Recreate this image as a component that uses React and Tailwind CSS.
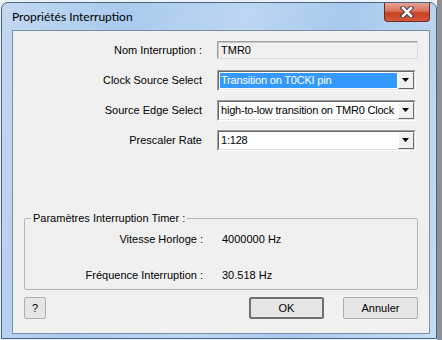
import React from 'react';

const body = { fontFamily: '"Liberation Sans", Arial, sans-serif' };

const Combo = ({ value, selected, width = 'w-[199px]' }) => (
    <div className={`${width} h-[21px] flex border border-[#a0a0a0] border-b-white border-r-white bg-white`}>
        <div className="flex-1 flex border border-[#696969] border-b-[#e3e3e3] border-r-[#e3e3e3] min-w-0">
            <div className="flex-1 min-w-0 p-[1px]">
                <div className={`h-full flex items-center pl-[1px] whitespace-nowrap overflow-hidden tracking-[-0.2px] ${selected ? 'bg-[#3399ff] text-white' : 'text-black'}`}>
                    {value}
                </div>
            </div>
            <div className="w-[16px] shrink-0 flex items-center justify-center bg-[#f0f0f0] border border-white border-b-[#696969] border-r-[#696969]">
                <svg width="8" height="5" viewBox="0 0 8 5"><path d="M0 0H7L3.5 4Z" fill="#000" /></svg>
            </div>
        </div>
    </div>
);

const Row = ({ label, children }) => (
    <div className="flex items-center h-[30px]">
        <div className="w-[190px] text-right pr-[1px] whitespace-nowrap">{label}</div>
        <div className="ml-[14px]">{children}</div>
    </div>
);

export default function App() {
    return (
        <div className="w-[442px] h-[340px] flex bg-[#eaf1f8] overflow-hidden text-[11px] text-black" style={body}>
            <div className="pt-[2px] pl-[1px]">
                {/* Window frame */}
                <div className="relative w-[436px] h-[337px] rounded-t-[7px] border border-[#4d6582] bg-[linear-gradient(100deg,#c3d8f0_0%,#a9cbee_25%,#bdd6f2_50%,#a7c9ee_70%,#c6dcf3_100%)] flex flex-col">
                    <div className="h-[27px] flex items-start shrink-0">
                        <div className="mt-[5px] ml-[10px] text-[12px] text-black" style={{ fontFamily: 'Lato, "Noto Sans", sans-serif' }}>
                            Propriétés Interruption
                        </div>
                        <div className="ml-auto mr-[6px] w-[46px] h-[19px] rounded-b-[4px] border border-t-0 border-[#6e2b22] bg-[linear-gradient(to_bottom,#e8a493_0%,#d8735c_45%,#c8401f_55%,#d35a3c_100%)] flex items-center justify-center">
                            <svg width="14" height="12" viewBox="0 0 14 12">
                                <path d="M3 2L11 10M11 2L3 10" stroke="#3a3f4a" strokeWidth="4.5" strokeLinecap="square" />
                                <path d="M3 2L11 10M11 2L3 10" stroke="#ffffff" strokeWidth="2.5" strokeLinecap="square" />
                            </svg>
                        </div>
                    </div>

                    {/* Client area */}
                    <div className="ml-[10px] w-[418px] h-[304px] border border-[#7c8ea4] bg-[#f0f0f0] flex flex-col">
                        <div className="pt-[4px]">
                            <Row label="Nom Interruption :">
                                <div className="w-[201px] h-[18px] flex items-center pl-[3px] bg-[#f0f0f0] border border-[#a0a0a0] border-b-[#dcdcdc] border-r-[#dcdcdc] shadow-[inset_1px_1px_0_#c8c8c8]">
                                    TMR0
                                </div>
                            </Row>
                            <Row label="Clock Source Select">
                                <Combo value="Transition on T0CKI pin" selected />
                            </Row>
                            <Row label="Source Edge Select">
                                <Combo value="high-to-low transition on TMR0 Clock" />
                            </Row>
                            <Row label="Prescaler Rate">
                                <Combo value="1:128" />
                            </Row>
                        </div>

                        <fieldset className="mt-[57px] ml-[11px] w-[394px] border border-[#b5b5b5] rounded-[2px] pb-[6px]">
                            <legend className="ml-[6px] px-[2px] leading-[13px]">Paramètres Interruption Timer :</legend>
                            <div className="pt-[6px] flex items-center h-[22px]">
                                <div className="w-[178px] text-right">Vitesse Horloge :</div>
                                <div className="ml-[19px]">4000000 Hz</div>
                            </div>
                            <div className="mt-[20px] flex items-center h-[16px]">
                                <div className="w-[178px] text-right">Fréquence Interruption :</div>
                                <div className="ml-[19px]">30.518 Hz</div>
                            </div>
                        </fieldset>

                        <div className="mt-[7px] pl-[11px] pr-[11px] flex items-center">
                            <button className="w-[22px] h-[22px] border border-[#adadad] bg-[#e5e5e5] rounded-[2px]">?</button>
                            <div className="ml-auto flex gap-[19px]">
                                <button className="w-[75px] h-[22px] border-2 border-[#707070] bg-[#e5e5e5] rounded-[2px]">OK</button>
                                <button className="w-[75px] h-[22px] border border-[#adadad] bg-[#e5e5e5] rounded-[2px]">Annuler</button>
                            </div>
                        </div>
                    </div>
                </div>
            </div>
            <div className="flex-1 bg-[#8c9198]" />
        </div>
    );
}
